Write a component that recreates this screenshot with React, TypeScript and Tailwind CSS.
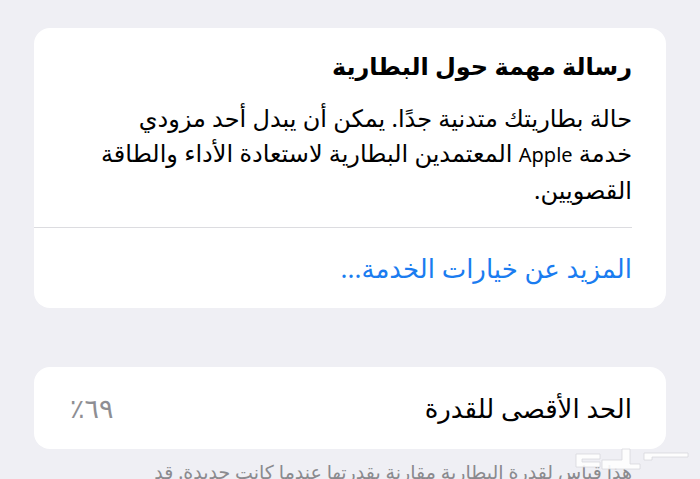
export default function App() {
  return (
    <div
      dir="rtl"
      className="relative w-[700px] h-[479px] overflow-hidden bg-[#efeff4] text-black"
      style={{ fontFamily: '"Noto Sans", "DejaVu Sans", sans-serif' }}
    >
      <div className="px-[34px] pt-[28px]">
        {/* Battery message card */}
        <div className="bg-white rounded-[16px] pr-[34px]">
          <div className="pt-[21px] pb-[20px]">
            <h2 className="text-[24px] font-bold leading-[34px]">رسالة مهمة حول البطارية</h2>
            <div className="mt-[17px] text-[24px] leading-[35px]">
              <p>حالة بطاريتك متدنية جدًا. يمكن أن يبدل أحد مزودي</p>
              <p>
                خدمة <span className="text-[20px]">Apple</span> المعتمدين البطارية لاستعادة الأداء والطاقة
              </p>
              <p>القصويين.</p>
            </div>
          </div>
          <div className="h-px bg-[#dcdce0]" />
          <div className="h-[80px] flex items-center text-[26px] text-[#1a7cf0]">
            المزيد عن خيارات الخدمة...
          </div>
        </div>

        {/* Maximum capacity card */}
        <div className="mt-[59px] bg-white rounded-[16px] h-[82px] pr-[34px] pl-[36px] flex items-center justify-between">
          <span className="text-[26px]">الحد الأقصى للقدرة</span>
          <span className="text-[27px] text-[#8e8e93]">٦٩٪</span>
        </div>

        <p className="mt-[12px] pr-[34px] text-[19px] leading-[22px] text-[#8a8a8e] whitespace-nowrap">
          هذا قياس لقدرة البطارية مقارنة بقدرتها عندما كانت جديدة. قد
        </p>
      </div>

      {/* faint watermark */}
      <svg
        className="absolute left-[560px] top-[440px]"
        width="140"
        height="39"
        viewBox="0 0 140 39"
        fill="#ffffff"
        stroke="#d6d6da"
        strokeWidth="0.8"
        opacity="0.9"
      >
        <path d="M16 14 L40 14 L40 19 L22 19 L22 22 L40 22 L40 27 L16 27 Z" />
        <path d="M42 20 L62 20 L62 9 L70 9 L70 24 L80 24 L80 29 L42 29 Z" />
        <path d="M84 13 L128 13 L128 17 L92 17 L92 20 L84 20 Z" />
      </svg>
    </div>
  );
}
